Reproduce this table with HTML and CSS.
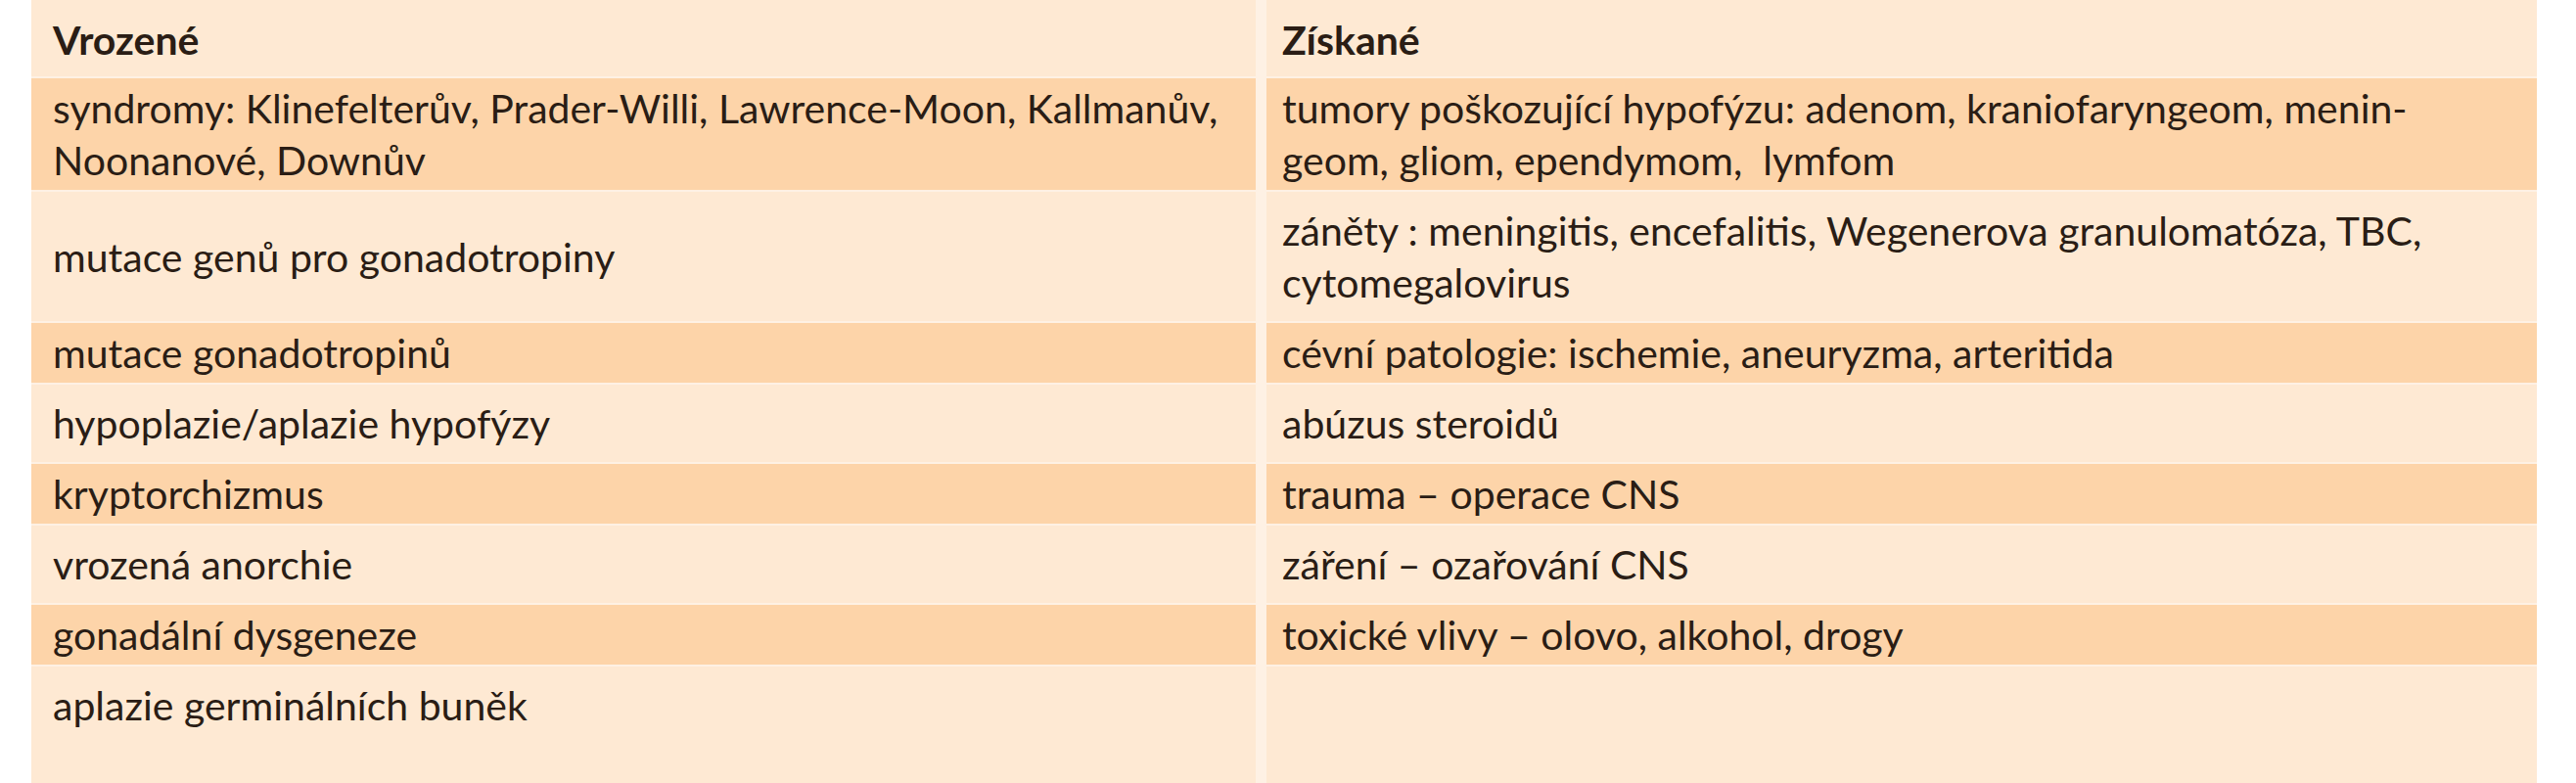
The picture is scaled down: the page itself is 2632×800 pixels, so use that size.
FILE: index.html
```html
<!DOCTYPE html>
<html lang="cs">
<head>
<meta charset="utf-8">
<title>Tabulka</title>
<link rel="stylesheet" href="styles.css">
</head>
<body>
<div class="page">
  <div class="causes">
    <div class="cell head">Vrozené</div>
    <div class="cell head">Získané</div>

    <div class="cell dark">syndromy: Klinefelterův, Prader-Willi, Lawrence-Moon, Kallmanův,<br>Noonanové, Downův</div>
    <div class="cell dark">tumory poškozující hypofýzu: adenom, kraniofaryngeom, menin-<br>geom, gliom, ependymom,&nbsp; lymfom</div>

    <div class="cell light">mutace genů pro gonadotropiny</div>
    <div class="cell light">záněty : meningitis, encefalitis, Wegenerova granulomatóza, TBC,<br>cytomegalovirus</div>

    <div class="cell dark">mutace gonadotropinů</div>
    <div class="cell dark">cévní patologie: ischemie, aneuryzma, arteritida</div>

    <div class="cell light">hypoplazie/aplazie hypofýzy</div>
    <div class="cell light">abúzus steroidů</div>

    <div class="cell dark">kryptorchizmus</div>
    <div class="cell dark">trauma – operace CNS</div>

    <div class="cell light">vrozená anorchie</div>
    <div class="cell light">záření – ozařování CNS</div>

    <div class="cell dark">gonadální dysgeneze</div>
    <div class="cell dark">toxické vlivy – olovo, alkohol, drogy</div>

    <div class="cell light last">aplazie germinálních buněk</div>
    <div class="cell light last"></div>
  </div>
</div>
</body>
</html>
```
FILE: styles.css
```css
html, body {
  margin: 0;
  padding: 0;
  background: #ffffff;
}
.page {
  padding: 0 40px 0 32px;
}
.causes {
  display: grid;
  grid-template-columns: 1251px 1298px;
  column-gap: 11px;
  row-gap: 2px;
  width: 2560px;
  background: #fef1e4;
  font-family: "Lato", "Open Sans", sans-serif;
  font-size: 41px;
  line-height: 53px;
  color: #2a1d15;
}
.cell {
  display: flex;
  flex-direction: column;
  justify-content: center;
  white-space: nowrap;
  padding-left: 22px;
}
.cell:nth-child(2n) {
  padding-left: 16px;
}
.head {
  background: #fee9d3;
  font-weight: bold;
  padding-top: 14px;
  padding-bottom: 11px;
}
.dark {
  background: #fdd4a9;
  padding-top: 4px;
  padding-bottom: 4px;
}
.light {
  background: #fee9d3;
  padding-top: 13px;
  padding-bottom: 13px;
}
.last {
  justify-content: flex-start;
  padding-bottom: 60px;
}
```
